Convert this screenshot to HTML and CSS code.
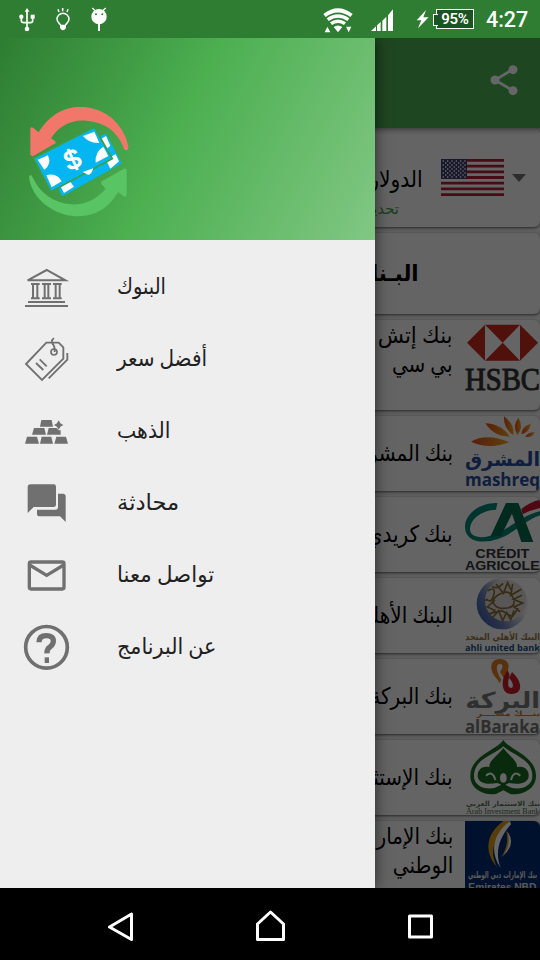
FILE: index.html
```html
<!DOCTYPE html>
<html lang="ar">
<head>
<meta charset="utf-8">
<title>البنوك</title>
<link rel="stylesheet" href="styles.css">
</head>
<body>
<div class="phone">
  <header class="status">
    <svg class="status-left" viewBox="0 0 360 114" fill="#fff" stroke="#fff">
      <path d="M81 32V86M64 50V61Q64 68 71 68H92Q98 68 98 61V50" fill="none" stroke-width="5"/>
      <path d="M81 24L88 35H74Z" stroke="none"/><circle cx="64" cy="50" r="6.500" stroke="none"/><path d="M92 44h12v12h-12z" stroke="none"/><circle cx="81" cy="87" r="7" stroke="none"/>
      <path d="M181 76C181 70 171 68 171 58A18 18 0 0 1 207 58C207 68 197 70 197 76M174 28l3 8M188 24v10M204 28l-3 8" fill="none" stroke-width="4.5"/>
      <path d="M180 74h18v10q-4 7-9 7t-9-7z" stroke="none"/>
      <circle cx="297" cy="50" r="23" stroke="none"/><path d="M297 68V93" stroke-width="6"/><path d="M277 24l10 10M317 24l-10 10" stroke-width="4"/>
      <circle cx="288" cy="43" r="3" fill="#2e7d32" stroke="none"/><circle cx="307" cy="43" r="3" fill="#2e7d32" stroke="none"/>
    </svg>
    <svg class="status-right" viewBox="60 0 270 114" fill="#fff">
      <path d="M70 42Q114 8 158 42L151 51Q114 24 77 51Z"/><path d="M80 55Q114 31 148 55L142 63Q114 43 86 63Z"/><path d="M90 67Q114 50 138 67L132 75Q114 63 96 75Z"/><path d="M101 81Q114 72 127 81L114 97Z"/>
      <path d="M74 97l8-17 9 17zM138 80h16l-8 17z"/>
      <path d="M213 93l15-14v14zM231 76l11-10v27h-11zM247 62l12-12v43h-12zM264 46l15-18v65h-15z"/>
    </svg>
    <svg class="bolt" viewBox="348 0 40 114" fill="#fff"><path d="M378 30L350 61H364L354 85L386 52H370Z"/></svg>
    <span class="battery"><span class="battery-text">95%</span></span>
    <span class="clock">4:27</span>
  </header>

  <div class="content">
    <main class="app" dir="rtl">
      <div class="appbar">
        <svg class="share" viewBox="570 192 84 96" fill="#fff" stroke="#fff"><path d="M639 208L585 240L639 272" fill="none" stroke-width="8"/><circle cx="639" cy="209" r="13.5" stroke="none"/><circle cx="585" cy="240" r="13.5" stroke="none"/><circle cx="639" cy="272" r="13.5" stroke="none"/></svg>
      </div>
      <section class="card currency">
        <span class="caret"></span>
        <svg class="flag" viewBox="0 0 189 111">
          <path fill="#fff" d="M0 0h189v111H0z"/>
          <path stroke="#b22234" stroke-width="8.54" d="M0 4.27h189M0 21.3h189M0 38.4h189M0 55.5h189M0 72.6h189M0 89.7h189M0 106.7h189"/>
          <path fill="#3c3b6e" d="M0 0h78v60H0z"/>
          <path stroke="#fff" stroke-width="4" stroke-dasharray="4 9" d="M5 6h70M5 18h70M5 30h70M5 42h70M5 54h70M12 12h62M12 24h62M12 36h62M12 48h62"/>
        </svg>
        <div class="currency-text"><span class="currency-name">الدولار</span><span class="updated">تحديث</span></div>
      </section>
      <section class="card heading"><b>البـنك</b></section>

      <section class="card bank tall">
        <svg class="logo" viewBox="315 30 225 270">
          <path fill="#fff" fill-opacity=".6" d="M375 44h105v108H375z"/><path fill="#c9281c" d="M321 98l54-54v108zM534 98l-54-54v108zM375 44h105l-52 54zM375 152h105l-52-54z"/>
          <text x="315" y="239" class="serif" font-size="94" fill="#333" stroke="#333" stroke-width="3" textLength="225" lengthAdjust="spacingAndGlyphs">HSBC</text>
        </svg>
        <p class="name"><span class="wide">بنك إتش</span><span class="tight">بي سي</span></p>
      </section>
      <section class="card bank">
        <svg class="logo" viewBox="315 318 225 225">
          <defs><linearGradient id="sun"><stop offset="0" stop-color="#df481e"/><stop offset="1" stop-color="#eda51d"/></linearGradient></defs>
          <g fill="url(#sun)"><path d="M333 395Q380 368 448 397Q388 420 333 395Z"/><path d="M376 340Q425 342 449 380Q402 380 376 340Z"/><path d="M432 319Q465 344 460 375Q430 355 432 319Z"/><path d="M475 323Q493 350 472 374Q456 348 475 323Z"/><path d="M512 341Q508 367 484 373Q486 349 512 341Z"/><path d="M523 366Q521 383 496 381Q502 368 523 366Z"/></g>
          <text x="540" y="468" class="arabic" direction="rtl" font-size="58" font-weight="bold" fill="#294b99" textLength="225" lengthAdjust="spacingAndGlyphs">المشرق</text>
          <text x="315" y="528" class="round" font-size="54" font-weight="700" fill="#294b99" textLength="225" lengthAdjust="spacingAndGlyphs">mashreq</text>
        </svg>
        <p class="name"><span>بنك المشرق</span></p>
      </section>
      <section class="card bank">
        <svg class="logo" viewBox="315 21 225 225">
          <path fill="#008577" d="M412 39C361 37 315 71 315 110C315 155 365 163 414 147C463 131 490 93 540 76V64C488 76 457 109 414 129C373 149 329 145 330 117C331 85 366 61 408 59Z"/>
          <path fill="#006a4d" d="M438 39h37l45 117h-36l-28-85-33 67-32 2z"/><path fill="#c41230" d="M484 57Q512 34 540 29V54Q512 60 488 73Z"/>
          <text x="346" y="204" class="sans" font-size="36" font-weight="bold" fill="#333" textLength="162" lengthAdjust="spacingAndGlyphs">CRÉDIT</text>
          <text x="315" y="239" class="sans" font-size="36" font-weight="bold" fill="#333" textLength="224" lengthAdjust="spacingAndGlyphs">AGRICOLE</text>
        </svg>
        <p class="name"><span>بنك كريدي</span></p>
      </section>
      <section class="card bank">
        <svg class="logo" viewBox="315 264 225 225">
          <defs><linearGradient id="globe" x1="0" y1="1" x2="1" y2=".35"><stop offset="0" stop-color="#244fa0"/><stop offset=".4" stop-color="#6e7eb8"/><stop offset=".8" stop-color="#eee"/></linearGradient></defs>
          <circle cx="427" cy="341" r="77" fill="url(#globe)"/><circle cx="437" cy="332" r="62" fill="#ddd9d8"/>
          <path fill="none" stroke="#8a6e36" stroke-width="5" d="M383 302q26-15 18 14t-22 10M408 282l22 28 13-32 13 28M458 282l-6 34 32-18M374 330l28 3-20 18 22 10-12 12M486 316l-26 12 28 11-26 12 18 14M398 382l18-20 12 30 12-25 12 22 10-28M410 318q35-25 48 3t-15 33-39-9 6-27M429 280q-18 20-33 9M387 371l38-9 32 18 18-25"/>
          <text x="540" y="449" class="arabic" direction="rtl" font-size="29" font-weight="bold" fill="#977743" textLength="224" lengthAdjust="spacingAndGlyphs">البنك الأهلي المتحد</text>
          <text x="315" y="484" class="round" font-size="28" font-weight="bold" fill="#105284" textLength="225" lengthAdjust="spacingAndGlyphs">ahli united bank</text>
        </svg>
        <p class="name"><span>البنك الأهلي</span></p>
      </section>
      <section class="card bank">
        <svg class="logo" viewBox="315 27 225 225">
          <path fill="#df7a1e" d="M412 88C388 66 385 27 420 27C455 28 450 62 431 84L420 66C430 52 430 42 419 42C407 43 407 60 424 90L418 99Z"/>
          <path fill="#c91d2a" d="M443 61C422 84 420 132 455 132C489 131 489 96 456 66L447 84C458 94 464 113 453 114C441 113 444 94 449 74Z"/>
          <text x="540" y="174" class="arabic" direction="rtl" font-size="66" font-weight="bold" fill="#777" textLength="224" lengthAdjust="spacingAndGlyphs">البركة</text>
          <text x="540" y="197" class="arabic" direction="rtl" font-size="22" font-weight="bold" fill="#cd762d" textLength="190" lengthAdjust="spacingAndGlyphs">بنـــك مصــــر</text>
          <text x="315" y="249" class="round" font-size="54" font-weight="bold" fill="#737373" textLength="224" lengthAdjust="spacingAndGlyphs">alBaraka</text>
        </svg>
        <p class="name"><span>بنك البركة</span></p>
      </section>
      <section class="card bank">
        <svg class="logo" viewBox="315 270 225 225">
          <path fill="#17691e" d="M430 270C451 302 528 318 528 377C528 419 485 436 451 432L430 421L408 432C373 436 331 419 331 377C331 318 408 302 430 270Z"/>
          <path fill="#fff" d="M430 289C455 315 517 325 517 378C517 408 486 420 456 414L430 402L403 414C373 420 342 408 342 378C342 325 404 315 430 289Z"/>
          <path fill="#17691e" d="M430 294C447 318 473 331 471 352C497 345 510 366 505 384C497 402 473 404 448 399L440 402L430 411L420 402L411 399C386 404 362 402 354 384C349 366 363 345 388 352C386 331 413 318 430 294Z"/>
          <ellipse cx="430" cy="384" rx="10" ry="14" fill="#fff"/><path d="M378 377q20-17 28 13M481 377q-20-17-28 13" stroke="#fff" stroke-width="6" fill="none"/>
          <text x="540" y="468" class="arabic" direction="rtl" font-size="21" font-weight="bold" fill="#55785b" textLength="222" lengthAdjust="spacingAndGlyphs">بنك الاستثمار العربي</text>
          <text x="318" y="492" class="serif" font-size="23" fill="#496c4e" textLength="220" lengthAdjust="spacingAndGlyphs">Arab Investment Bank</text>
        </svg>
        <p class="name"><span>بنك الإستثمار</span></p>
      </section>
      <section class="card bank tall">
        <svg class="logo" viewBox="315 33 225 270">
          <path fill="#002c72" d="M315 33H540V303H315z"/>
          <path fill="#d99b18" d="M430 33C380 70 369 124 412 172C386 123 402 81 450 33Z"/><path fill="#fff" d="M450 33C398 73 388 125 422 174C402 123 421 77 453 43Z"/>
          <path fill="#d99b18" d="M438 60Q468 99 423 143Q450 101 438 60Z"/><path fill="#fff" d="M442 65Q470 102 428 139Q456 103 442 65Z"/>
          <text x="531" y="205" class="arabic" direction="rtl" font-size="29" font-weight="bold" fill="#ddd" textLength="207" lengthAdjust="spacingAndGlyphs">بنك الإمارات دبي الوطني</text>
          <text x="325" y="244" class="sans" font-size="32" font-weight="bold" fill="#ddd" textLength="204" lengthAdjust="spacingAndGlyphs">Emirates NBD</text>
        </svg>
        <p class="name"><span>بنك الإمارات</span><span class="tight">الوطني</span></p>
      </section>
    </main>
    <div class="scrim"></div>

    <aside class="drawer">
      <div class="drawer-head">
        <svg class="brand" viewBox="50 50 310 330">
          <path fill="#f2776b" d="M60 192V116Q61 108 69 113L85 126C139 38 220 42 264 60C309 77 345 119 354 169Q354 180 347 179Q341 179 339 169C319 121 283 96 229 91C178 86 143 111 122 144L135 153Q138 160 130 162L69 197Q61 199 60 192Z"/>
          <path fill="#58c464" d="M56 259Q62 248 68 263C89 309 132 338 181 342C226 344 260 326 286 295L274 282Q269 275 277 271L341 235Q350 232 349 242V313Q348 323 340 318L323 305C285 373 222 386 166 373C112 359 63 318 56 259Z"/>
          <path fill="#03b6f2" d="M145 294L153 314Q157 318 162 315L334 219L288 132Q284 128 279 133L270 137L299 197Z"/>
          <path fill="#fff" d="M150 287L178 272L191 289L161 308ZM272 146L287 137L300 166L286 178L275 156ZM286 207L316 192L326 213L300 235Z"/>
          <path fill="#03b6f2" stroke="#3f9d43" stroke-width="5" d="M70 204L252 110L306 205L122 304Z"/>
          <path fill="#fff" d="M82 208L113 195Q125 223 102 238ZM218 137L252 124L267 158Q237 160 218 137ZM108 255Q139 246 154 273L124 291ZM256 217Q253 185 279 169L294 197ZM217 245L249 234Q241 257 233 253Z"/>
          <text x="187" y="235" class="sans" font-size="82" fill="#fff" stroke="#fff" stroke-width="3" text-anchor="middle" transform="rotate(-24 187 208)">$</text>
        </svg>
      </div>
      <nav class="menu">
        <a class="item"><svg class="icon" viewBox="66 3 150 216"><path fill="none" stroke="#707070" stroke-width="6" d="M83 91L140 60L196 91ZM93 102h26M126 102h27M159 102h26M93 145h26M126 145h27M159 145h26M84 156h111M75 168h129"/><path fill="none" stroke="#707070" stroke-width="6" d="M99 101v43M112 101v43M134 101v43M145 101v43M167 101v43M179 101v43"/></svg><span class="label l1">البنوك</span></a>
        <a class="item"><svg class="icon" viewBox="66 219 150 216"><path fill="none" stroke="#707070" stroke-width="5.5" d="M78 342L139 278H176L190 292V326L126 390ZM202 309V329L146 385M108 339L130 360M119 328L140 349M162 265Q151 272 158 282Q165 288 164 306"/><circle cx="162" cy="306" r="9" fill="none" stroke="#707070" stroke-width="5"/></svg><span class="label l2">أفضل سعر</span></a>
        <a class="item"><svg class="icon" viewBox="66 435 150 216"><path fill="#707070" d="M124 510h31l4 20h-39zM102 534h31l5 20H96zM146 534h24l6 7h6v13h-41zM81 560h30l6 21H75zM125 560h29l5 21h-39zM169 560h29l6 21h-41zM176 511l5 9 9 5-9 5-5 9-5-9-9-5 9-5z"/></svg><span class="label l3">الذهب</span></a>
        <a class="item"><svg class="icon" viewBox="66 21 150 216"><path fill="#707070" d="M91 73H161Q168 73 168 80V134Q168 141 161 141H101L83 159V81Q83 73 91 73ZM174 101H189Q197 101 197 109V186L180 169H119Q111 169 111 161V149H167Q174 149 174 142Z"/></svg><span class="label l4">محادثة</span></a>
        <a class="item"><svg class="icon" viewBox="66 237 150 216"><rect x="88" y="306" width="104" height="81" rx="5" fill="none" stroke="#707070" stroke-width="10"/><path d="M89 315L140 346L191 315" fill="none" stroke="#707070" stroke-width="10"/></svg><span class="label l5">تواصل معنا</span></a>
        <a class="item"><svg class="icon" viewBox="66 453 150 216"><circle cx="139.500" cy="562" r="62.500" fill="none" stroke="#707070" stroke-width="11"/><path fill="none" stroke="#707070" stroke-width="16" d="M117 547Q117 527 139 527Q161 527 160 544Q160 553 150 561Q140 567 141 580"/><path fill="#707070" d="M134 592h13v17h-13z"/></svg><span class="label l6">عن البرنامج</span></a>
      </nav>
    </aside>
  </div>

  <footer class="navbar">
    <svg viewBox="0 0 540 72" fill="none" stroke="#fff" stroke-width="3" stroke-linejoin="round"><path d="M109.500 39L131.500 26V51.500ZM257.500 36L270.500 24L283.500 36V51.500H257.500ZM409.500 28h22v21h-22z"/></svg>
  </footer>
</div>
</body>
</html>
```

FILE: styles.css
```css
* { box-sizing: border-box; }
body { margin: 0; background: #000; font-family: Roboto, "Noto Sans", "DejaVu Sans", sans-serif; }
.phone { width: 540px; height: 960px; display: flex; flex-direction: column; overflow: hidden; }

.status { height: 38px; background: #2e7d32; display: flex; color: #fff; }
.status-left { width: 120px; height: 38px; }
.status-right { width: 90px; height: 38px; margin-left: 200px; }
.bolt { width: 13.33px; height: 38px; margin-left: 6px; }
.battery { position: relative; width: 38px; height: 20px; margin: 9px 0 0 6.67px; border: 1px solid #fff; background: #1b5420; display: flex; align-items: center; justify-content: center; }
.battery::before { content: ""; position: absolute; left: -4px; top: 4px; width: 4px; height: 10px; border: 1px solid #fff; border-right: 0; background: #1b5420; }
.battery-text { font-size: 15px; font-weight: 600; line-height: 18px; letter-spacing: -.3px; }
.clock { font-size: 21.500px; font-weight: 500; line-height: 40px; margin-left: 12px; }

.content { position: relative; height: 850px; overflow: hidden; background: #eee; }
.app { height: 850px; overflow: hidden; display: flex; flex-direction: column; isolation: isolate; }
.appbar { flex: none; height: 90px; background: #4caf50; display: flex; align-items: center; padding: 0 22px 6px 0; box-shadow: 0 2px 5px rgba(0,0,0,.4); z-index: 1; }
.share { width: 28px; height: 32px; }
.card { flex: none; background: #fafafa; border-radius: 6px; height: 75px; margin-bottom: 6px; box-shadow: 0 1px 3px rgba(0,0,0,.6); display: flex; overflow: hidden; color: #000; white-space: nowrap; }
.currency { height: 99px; align-items: center; padding-right: 14px; }
.caret { border: 7px solid transparent; border-top: 8px solid #707070; border-bottom: 0; }
.flag { width: 63px; height: 37px; margin-right: 8px; }
.currency-text { display: flex; flex-direction: column; margin: 24px 18px 0 0; }
.currency-name { font-size: 23px; line-height: 38px; transform: scaleX(.88); transform-origin: right; }
.updated { font-size: 15px; line-height: 20px; color: #43a047; padding-right: 24px; }
.heading { height: 81px; align-items: center; padding-right: 121px; font-size: 23px; }
.heading b { transform: scaleX(.92); transform-origin: right; }
.bank { align-items: center; }
.tall { height: 90px; align-items: flex-start; }
.logo { flex: none; width: 75px; height: 75px; direction: ltr; }
.tall .logo { height: 90px; }
.name { margin: 0 12px 0 0; font-size: 23px; line-height: 29px; }
.name span { display: block; transform: scaleX(.87); transform-origin: right; }
.name .wide { transform: scaleX(.93); }
.name .tight { transform: scaleX(.87); }
.tall .name { padding-top: 1px; }
.scrim { position: absolute; inset: 0; background: rgba(0,0,0,.6); }

.drawer { position: absolute; left: 0; top: 0; width: 375px; height: 850px; background: #eee; box-shadow: 0 0 14px rgba(0,0,0,.6); }
.drawer-head { height: 202px; padding: 69px 0 0 26.67px; background: linear-gradient(116.5deg, #2e7d32, #4caf50 47%, #81c784); }
.brand { display: block; width: 103.33px; height: 110px; }
.menu { padding-top: 11px; }
.item { display: flex; align-items: center; height: 72px; padding-left: 22px; }
.icon { flex: none; width: 50px; height: 72px; }
.label { margin-left: 45px; font-size: 22px; line-height: 30px; color: #212121; white-space: nowrap; transform-origin: left; }
.l1 { transform: scaleX(.88); }
.l2 { transform: scaleX(.91); }
.l3 { transform: scaleX(.93); }
.l4 { transform: scaleX(1.03); }
.l5 { transform: scaleX(.97); }
.l6 { transform: scaleX(.94); }

.navbar { height: 72px; background: #000; }
.navbar svg { display: block; width: 540px; height: 72px; }
.serif { font-family: "Liberation Serif", serif; }
.sans { font-family: "Liberation Sans", sans-serif; }
.round { font-family: "Open Sans", sans-serif; }
.arabic { font-family: "DejaVu Sans", sans-serif; }
```
